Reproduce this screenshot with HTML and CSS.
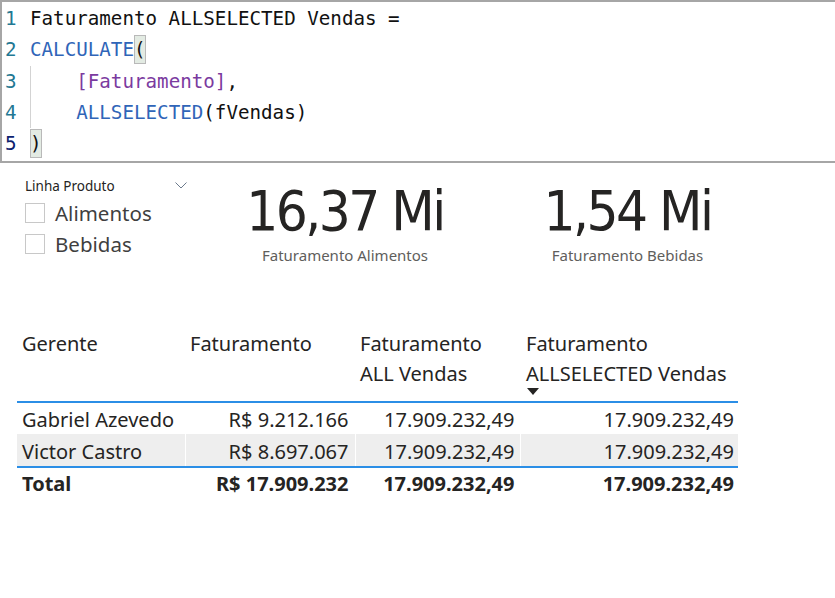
FILE: index.html
```html
<!DOCTYPE html>
<html lang="pt">
<head>
<meta charset="utf-8">
<title>DAX</title>
<link rel="stylesheet" href="styles.css">
</head>
<body>
<div class="editor">
  <div class="line"><span class="ln">1</span><span class="code">Faturamento ALLSELECTED Vendas =</span></div>
  <div class="line"><span class="ln">2</span><span class="code"><span class="fn">CALCULATE</span><span class="br">(</span></span></div>
  <div class="line"><span class="ln">3</span><span class="code guide">    <span class="mes">[Faturamento]</span>,</span></div>
  <div class="line"><span class="ln">4</span><span class="code guide">    <span class="fn">ALLSELECTED</span>(fVendas)</span></div>
  <div class="line"><span class="ln cur">5</span><span class="code"><span class="br">)</span></span></div>
</div>

<div class="visuals">
  <div class="slicer">
    <div class="slicer-head">
      <span class="slicer-title">Linha Produto</span>
      <svg class="chev" width="12" height="7" viewBox="0 0 12 7"><path d="M0.5 0.5 L6 6 L11.5 0.5" fill="none" stroke="#6b7a8c" stroke-width="1"/></svg>
    </div>
    <div class="opt"><span class="box"></span>Alimentos</div>
    <div class="opt"><span class="box"></span>Bebidas</div>
  </div>
  <div class="card c1">
    <div class="big">16,37 Mi</div>
    <div class="cap">Faturamento Alimentos</div>
  </div>
  <div class="card c2">
    <div class="big">1,54 Mi</div>
    <div class="cap">Faturamento Bebidas</div>
  </div>
</div>

<table class="grid">
  <thead>
    <tr>
      <th class="w1">Gerente</th>
      <th class="w2">Faturamento</th>
      <th class="w3">Faturamento<br>ALL Vendas</th>
      <th class="w4">Faturamento<br>ALLSELECTED Vendas<span class="sort"></span></th>
    </tr>
  </thead>
  <tbody>
    <tr class="r1">
      <td>Gabriel Azevedo</td>
      <td class="num n2">R$ 9.212.166</td>
      <td class="num n3">17.909.232,49</td>
      <td class="num n4">17.909.232,49</td>
    </tr>
    <tr class="alt">
      <td>Victor Castro</td>
      <td class="num n2">R$ 8.697.067</td>
      <td class="num n3">17.909.232,49</td>
      <td class="num n4">17.909.232,49</td>
    </tr>
  </tbody>
  <tfoot>
    <tr>
      <td>Total</td>
      <td class="num n2">R$ 17.909.232</td>
      <td class="num n3">17.909.232,49</td>
      <td class="num n4">17.909.232,49</td>
    </tr>
  </tfoot>
</table>
</body>
</html>
```

FILE: styles.css
```css
html, body {
  margin: 0;
  padding: 0;
  background: #ffffff;
}
body {
  width: 835px;
  height: 598px;
  overflow: hidden;
  font-family: "Noto Sans", "Open Sans", sans-serif;
  color: #252423;
}

/* ---------- code editor ---------- */
.editor {
  box-sizing: border-box;
  height: 163px;
  border: 2px solid #a6a6a6;
  border-right: none;
  padding-top: 1px;
  font-family: "DejaVu Sans Mono", "Liberation Mono", monospace;
  font-size: 19.2px;
  color: #111;
}
.line {
  display: flex;
  height: 31.3px;
  align-items: center;
}
.ln {
  width: 28px;
  padding-left: 3px;
  box-sizing: border-box;
  color: #237893;
}
.ln.cur { color: #0b216f; }
.code {
  white-space: pre;
  position: relative;
}
.guide::before {
  content: "";
  position: absolute;
  left: 0;
  top: -4px;
  bottom: -4px;
  border-left: 1px solid #d3d3d3;
}
.fn { color: #3065b8; }
.mes { color: #7b3b9f; }
.br {
  background: #e3ebe3;
  outline: 1px solid #b9b9b9;
  outline-offset: -1px;
  padding: 3px 0;
}

/* ---------- slicer + cards ---------- */
.visuals {
  display: flex;
  height: 137px;
}
.slicer {
  width: 205px;
  box-sizing: border-box;
  padding: 14px 0 0 25px;
}
.slicer-head {
  display: flex;
  justify-content: space-between;
  align-items: center;
  width: 162px;
  height: 18px;
  margin-bottom: 2px;
}
.slicer-title {
  font-size: 13.5px;
  color: #252423;
}
.chev { margin-top: -2px; }
.opt {
  display: flex;
  align-items: center;
  height: 31px;
  font-size: 20.5px;
  color: #3f3f3f;
}
.box {
  width: 18px;
  height: 18px;
  border: 1px solid #c8c8c8;
  margin-right: 10px;
}
.card {
  display: flex;
  flex-direction: column;
  align-items: center;
  padding-top: 15px;
}
.c1 { width: 280px; }
.c2 { width: 285px; }
.big {
  font-family: "DejaVu Sans Condensed", "DejaVu Sans", sans-serif;
  font-size: 56px;
  line-height: 66px;
  letter-spacing: -2.5px;
  color: #252423;
}
.cap {
  font-size: 15px;
  color: #605e5c;
  margin-top: 1px;
}

/* ---------- table ---------- */
.grid {
  margin-left: 17px;
  margin-top: 29px;
  width: 721px;
  border-collapse: collapse;
  font-size: 20px;
  table-layout: fixed;
}
th, td { box-sizing: border-box; }
.w1 { width: 168px; }
.w2 { width: 170px; }
.w3 { width: 165px; }
.w4 { width: 218px; }
th {
  text-align: left;
  font-weight: normal;
  vertical-align: top;
  line-height: 30px;
  padding: 0 5px 0 5px;
  height: 73px;
  position: relative;
  border-bottom: 2px solid #2b8ee6;
}
th.w4 { padding-left: 6px; }
td {
  padding: 0 5px;
  white-space: nowrap;
  border-left: 1px solid #ffffff;
}
tr.r1 td { height: 32px; padding-top: 2px; }
tr.alt td { height: 33px; padding-top: 2px; }
td:first-child { border-left: none; }
.num { text-align: right; }
.n2 { padding-right: 6px; }
.n4 { padding-right: 4px; }
tbody tr.alt td {
  background: #eeeeee;
  border-bottom: 2px solid #2b8ee6;
}
tfoot td {
  font-weight: bold;
  height: 34px;
  padding-top: 1px;
  padding-bottom: 3px;
}
.sort {
  position: absolute;
  left: 7px;
  bottom: 6px;
  width: 0;
  height: 0;
  border-left: 6px solid transparent;
  border-right: 6px solid transparent;
  border-top: 7px solid #252423;
}
```
